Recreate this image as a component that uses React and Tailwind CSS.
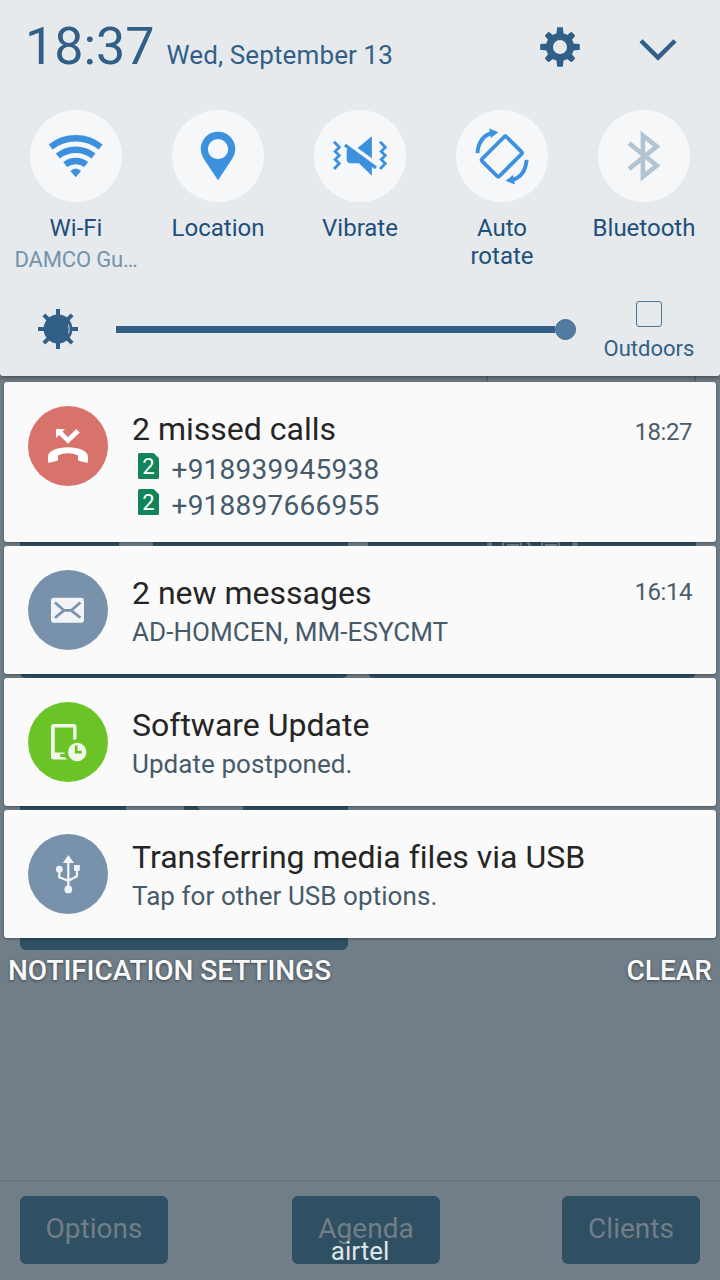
import React from "react";

const DIAGONALS = [45, 135, 225, 315];
const STRAIGHTS = [0, 90, 180, 270];

function GearIcon() {
  return (
    <svg width="40" height="40" viewBox="-20 -20 40 40" fill="#315f87">
      <path
        fillRule="evenodd"
        d="M0 -14A14 14 0 1 1 0 14A14 14 0 1 1 0 -14ZM0 -7A7 7 0 1 0 0 7A7 7 0 1 0 0 -7Z"
      />
      {STRAIGHTS.map((a) => (
        <path key={a} transform={`rotate(${a})`} d="M-3.6 -12L-2.9 -19.4Q-2.8 -19.8 -2.3 -19.8H2.3Q2.8 -19.8 2.9 -19.4L3.6 -12Z" />
      ))}
      {DIAGONALS.map((a) => (
        <path key={a} transform={`rotate(${a})`} d="M-3.6 -12L-2.9 -18Q-2.7 -18.9 -1.9 -18.9H1.9Q2.7 -18.9 2.9 -18L3.6 -12Z" />
      ))}
    </svg>
  );
}

function ChevronIcon() {
  return (
    <svg width="40" height="24" viewBox="638 38 40 24" fill="none">
      <path d="M641 40.8L658 57.6L675 40.8" stroke="#315f87" strokeWidth="4.4" />
    </svg>
  );
}

function WifiIcon() {
  return (
    <svg width="92" height="92" viewBox="30 110 92 92" fill="none" stroke="#3c91df">
      <path d="M50.7 147A40.2 40.2 0 0 1 100.7 147" strokeWidth="6.5" />
      <path d="M57.9 156A28.5 28.5 0 0 1 93.5 156" strokeWidth="6.6" />
      <path d="M65.2 164.6A17 17 0 0 1 86.2 164.6" strokeWidth="6.4" />
      <path d="M75.7 177.3L70.4 171Q75.7 166 81 171Z" fill="#3c91df" stroke="none" />
    </svg>
  );
}

function PinIcon() {
  return (
    <svg width="92" height="92" viewBox="172 110 92 92">
      <path
        fill="#3c91df"
        fillRule="evenodd"
        d="M218 180.3L203.6 158.5Q200.7 153.5 200.7 149A17.3 17.3 0 0 1 235.3 149Q235.3 153.5 232.4 158.5ZM218 138.9A10.2 10.2 0 1 0 218 159.3A10.2 10.2 0 1 0 218 138.9Z"
      />
    </svg>
  );
}

function VibrateIcon() {
  const zigzag = "M334 141.7L339.3 147.2L335.2 151.4L339.3 155.4L335.2 159.4L339.3 163.6L334 169";
  return (
    <svg width="92" height="92" viewBox="314 110 92 92" fill="#3c91df">
      <g fill="none" stroke="#3c91df">
        <path d={zigzag} strokeWidth="2.8" />
        <path d={zigzag} transform="translate(46 0)" strokeWidth="2.8" />
        <path d="M345 145L376 167.8" strokeWidth="3.3" />
      </g>
      <path d="M371.9 136.3V158.2L357.6 147.9Z" />
      <path d="M348.5 147.6Q346.7 149 346.7 151V159.8Q347 163.2 350.5 163.3H359L371.9 175.8V165L349 148Z" />
    </svg>
  );
}

function RotateArrow() {
  return (
    <>
      <path d="M477.4 153.2Q478.8 136.6 492 133" fill="none" stroke="#3c91df" strokeWidth="3.9" />
      <path d="M489.2 128.4L498.4 132.3L490.8 137.9Z" fill="#3c91df" />
    </>
  );
}

function AutoRotateIcon() {
  return (
    <svg width="92" height="92" viewBox="456 110 92 92">
      <rect x="484.6" y="144.3" width="34.4" height="24.4" rx="1.8" fill="none" stroke="#3c91df" strokeWidth="3.8" transform="rotate(-45 501.8 156.5)" />
      <RotateArrow />
      <g transform="rotate(180 502 156.5)">
        <RotateArrow />
      </g>
    </svg>
  );
}

function BluetoothIcon() {
  return (
    <svg width="92" height="92" viewBox="598 110 92 92" fill="none">
      <path d="M629 143.2L656.8 165.6L642.9 176.8V135.4L656.8 146.4L629 169" stroke="#b2c4d2" strokeWidth="4.6" />
    </svg>
  );
}

function BrightnessIcon() {
  return (
    <svg width="40" height="40" viewBox="-20 -20 40 40" fill="#315f87">
      <circle r="14.4" />
      {[...STRAIGHTS, ...DIAGONALS].map((a) => (
        <rect key={a} transform={`rotate(${a})`} x="-2" y="-20" width="4" height="8" />
      ))}
      <path d="M10.6 -4.5Q11.8 0 10.6 4.5" stroke="#c9d5de" strokeWidth="1" fill="none" />
    </svg>
  );
}

function MissedCallIcon() {
  return (
    <svg width="80" height="80" viewBox="28 406 80 80" fill="#ffffff">
      <path d="M56 429H65L62.5 431.6L68 437.2L76.2 429L79.8 432.4L68 443.8L59.3 435L56 438Z" />
      <path d="M48 456.5C48 451 57 447.2 68 447.2C79 447.2 88 451 88 456.5V461.4Q88 463 86.4 462.7L79.4 461Q77.7 460.5 77.9 458.8L78.3 455.6Q73.5 453.2 68 453.2Q62.5 453.2 57.7 455.6L58.1 458.8Q58.3 460.5 56.6 461L49.6 462.7Q48 463 48 461.4Z" />
    </svg>
  );
}

function MessageIcon() {
  return (
    <svg width="80" height="80" viewBox="28 570 80 80" fill="none">
      <rect x="51" y="597.8" width="33" height="25" rx="3" fill="#f1f3f7" />
      <path d="M55 602.5L64 610.4H71.2L80.4 602.5M55 617.8L64 610.4M71.2 610.4L80.4 617.8" stroke="#7892ab" strokeWidth="2.7" />
    </svg>
  );
}

function UpdateIcon() {
  return (
    <svg width="80" height="80" viewBox="28 702 80 80">
      <path
        fill="#f1f8ea"
        fillRule="evenodd"
        d="M54 724H73.5Q76.5 724 76.5 727V739Q74.8 739.2 73.2 740.2V727.5H54.8V752.6H64.5L64.8 757.4L67.5 759.4H54Q51 759.4 51 756.4V727Q51 724 54 724Z"
      />
      <path d="M60.2 754H66V757H60.2Z" fill="#6bc427" />
      <circle cx="77.2" cy="752" r="9.2" fill="#f1f8ea" />
      <path d="M76.2 745.6V752.2H81.8" fill="none" stroke="#6bc427" strokeWidth="2.7" />
    </svg>
  );
}

function UsbIcon() {
  return (
    <svg width="80" height="80" viewBox="28 834 80 80" fill="#f1f3f7">
      <path d="M68.3 855L74 863H62.8Z" />
      <circle cx="59.3" cy="869.2" r="3.4" />
      <rect x="74" y="865" width="5.8" height="5.8" />
      <circle cx="68.3" cy="889.4" r="3.9" />
      <path d="M68.3 860V888M59.3 869V877.3L68.3 880.8L76.9 876.3V868" fill="none" stroke="#f1f3f7" strokeWidth="2.3" />
    </svg>
  );
}

function SimBadge() {
  return (
    <svg width="21" height="26" viewBox="0 0 21 26" className="mt-px shrink-0">
      <path d="M1.5 0H15.5L21 5.2V24.5Q21 26 19.5 26H1.5Q0 26 0 24.5V1.5Q0 0 1.5 0Z" fill="#118458" />
      <text x="10.4" y="21.2" textAnchor="middle" fontSize="22" fill="#ffffff" fontFamily="Roboto, sans-serif">2</text>
    </svg>
  );
}

function Toggle({ icon, label, detail }) {
  return (
    <div className="flex flex-col items-center text-center">
      <div className="size-[92px] rounded-full bg-[#f5f7f9]">{icon}</div>
      <div className="mt-3 w-[110px] text-2xl leading-7 text-[#1f4f7b]">{label}</div>
      {detail && <div className="mt-1 whitespace-nowrap text-[22px] leading-7 tracking-[-0.15px] text-[#7493ad]">{detail}</div>}
    </div>
  );
}

function Notification({ color, icon, title, time, timeClass, tall, children }) {
  return (
    <article className={`flex ${tall ? "h-40" : "h-32"} rounded-[3px] bg-[#fafafa] px-6 pt-6 shadow-[0_1px_3px_rgba(0,0,0,0.35)]`}>
      <div className={`size-20 shrink-0 rounded-full ${color}`}>{icon}</div>
      <div className="ml-6 grow">
        <h2 className="text-[32px] leading-[46px] text-[#252525]">{title}</h2>
        {children}
      </div>
      {time && <time className={`text-2xl leading-7 tracking-[-0.45px] text-[#4a5c6c] ${timeClass}`}>{time}</time>}
    </article>
  );
}

function Detail({ children }) {
  return <p className="text-[26px] leading-8 tracking-[0.06px] text-[#465a6a]">{children}</p>;
}

function PhoneLine({ number }) {
  return (
    <div className="flex h-9 pl-[5.5px]">
      <SimBadge />
      <span className="ml-[13px] pt-[2px] text-[28px] leading-8 tracking-[0.25px] text-[#465a6a]">{number}</span>
    </div>
  );
}

function AppButton({ width, children }) {
  return <div className={`${width} h-[68px] rounded-md bg-[#2f4f63] text-center text-[28px] leading-[65px] text-[#717e87]`}>{children}</div>;
}

function BackgroundApp() {
  return (
    <div className="flex h-full flex-col bg-[#717e87]">
      <div className="flex grow flex-col px-5 pt-[376px]">
        <div className="ml-[466px] h-[46px] w-[210px] border-x-2 border-[#5f6c74]" />
        <div className="flex gap-5">
          <div className="h-64 w-[328px] rounded-md bg-[#2f4f63] pl-[99px] pt-[100px]">
            <div className="h-12 w-[34px] bg-[#717e87]" />
          </div>
          <div className="h-64 w-[328px] rounded-md bg-[#2f4f63] pl-[119px] pt-[100px]">
            <svg width="91" height="48" viewBox="0 0 91 48" stroke="#717e87" fill="none">
              <path d="M2.5 0V48M88 0V48" strokeWidth="5" />
              <path d="M16 20H34V48M16 20V48M40 20L50 32M42 20V48M55 20H72V48M55 20V48M20 23H32M58 23H70" strokeWidth="2" />
            </svg>
          </div>
        </div>
        <div className="mt-5 h-[252px] w-[328px] rounded-md bg-[#2f4f63] pl-[106px] pt-[90px]">
          <svg width="117" height="60" viewBox="0 0 117 60" fill="#717e87">
            <path d="M0 0H58V60H0ZM70 16H117V60H98Z" />
          </svg>
        </div>
      </div>
      <div className="flex h-[100px] justify-between border-t-2 border-[#68757e] px-5 pt-3.5">
        <AppButton width="w-[148px]">Options</AppButton>
        <AppButton width="w-[148px] ml-[2px]">Agenda</AppButton>
        <AppButton width="w-[138px]">Clients</AppButton>
      </div>
    </div>
  );
}

function QuickPanel() {
  return (
    <header className="h-[376px] rounded-b-[3px] bg-[#e6eaed] shadow-[0_2px_4px_rgba(0,0,0,0.4)]">
      <div className="flex h-[110px] justify-between pl-[25px] pr-[42px] text-[#315f87]">
        <div className="flex items-baseline">
          <span className="text-[52px] leading-[94px]">18:37</span>
          <span className="ml-3 text-[26px] tracking-[0.12px]">Wed, September 13</span>
        </div>
        <div className="flex pt-[27px]">
          <GearIcon />
          <div className="ml-[58px] pt-[11px]">
            <ChevronIcon />
          </div>
        </div>
      </div>
      <div className="grid h-[180px] grid-cols-5 px-[5px]">
        <Toggle icon={<WifiIcon />} label="Wi-Fi" detail="DAMCO Gu…" />
        <Toggle icon={<PinIcon />} label="Location" />
        <Toggle icon={<VibrateIcon />} label="Vibrate" />
        <Toggle icon={<AutoRotateIcon />} label={<>Auto<br />rotate</>} />
        <Toggle icon={<BluetoothIcon />} label="Bluetooth" />
      </div>
      <div className="flex pl-[38px]">
        <div className="pt-[19px]">
          <BrightnessIcon />
        </div>
        <div className="ml-[38px] mt-[28px] flex h-[22px] w-[460px] items-center">
          <div className="h-[7px] w-[439px] bg-[#315f87]" />
          <div className="size-[21px] rounded-full border border-[#41698f] bg-[#527ba4]" />
        </div>
        <div className="ml-[28px] flex w-[90px] flex-col items-center pt-[10.5px]">
          <div className="size-[26px] rounded-[3px] border-[1.5px] border-[#4d7596]" />
          <div className="mt-[-1px] text-[22px] leading-[46px] text-[#315f87]">Outdoors</div>
        </div>
      </div>
    </header>
  );
}

export default function App() {
  return (
    <div className="relative h-[1280px] w-[720px] overflow-hidden font-['Roboto',sans-serif] [font-variant-ligatures:none]">
      <BackgroundApp />
      <div className="absolute inset-0 flex flex-col">
        <QuickPanel />
        <main className="flex flex-col gap-1 px-1 pt-1.5">
          <Notification tall color="bg-[#d7736b]" icon={<MissedCallIcon />} title="2 missed calls" time="18:27" timeClass="pt-[12px]">
            <PhoneLine number="+918939945938" />
            <PhoneLine number="+918897666955" />
          </Notification>
          <Notification color="bg-[#7892ab]" icon={<MessageIcon />} title="2 new messages" time="16:14" timeClass="pt-[8px]">
            <Detail>AD-HOMCEN, MM-ESYCMT</Detail>
          </Notification>
          <Notification color="bg-[#6bc427]" icon={<UpdateIcon />} title="Software Update">
            <Detail>Update postponed.</Detail>
          </Notification>
          <Notification color="bg-[#7892ab]" icon={<UsbIcon />} title="Transferring media files via USB">
            <Detail>Tap for other USB options.</Detail>
          </Notification>
        </main>
        <div className="flex grow justify-between px-2 pt-[13px] text-[28px] font-medium leading-10 text-[#fafafa] [text-shadow:0_1px_3px_rgba(0,0,0,0.5)]">
          <span className="tracking-[-0.06px]">NOTIFICATION SETTINGS</span>
          <span>CLEAR</span>
        </div>
        <div className="pb-[13px] text-center text-[26px] leading-8 text-[#dfe5e8]">airtel</div>
      </div>
    </div>
  );
}
